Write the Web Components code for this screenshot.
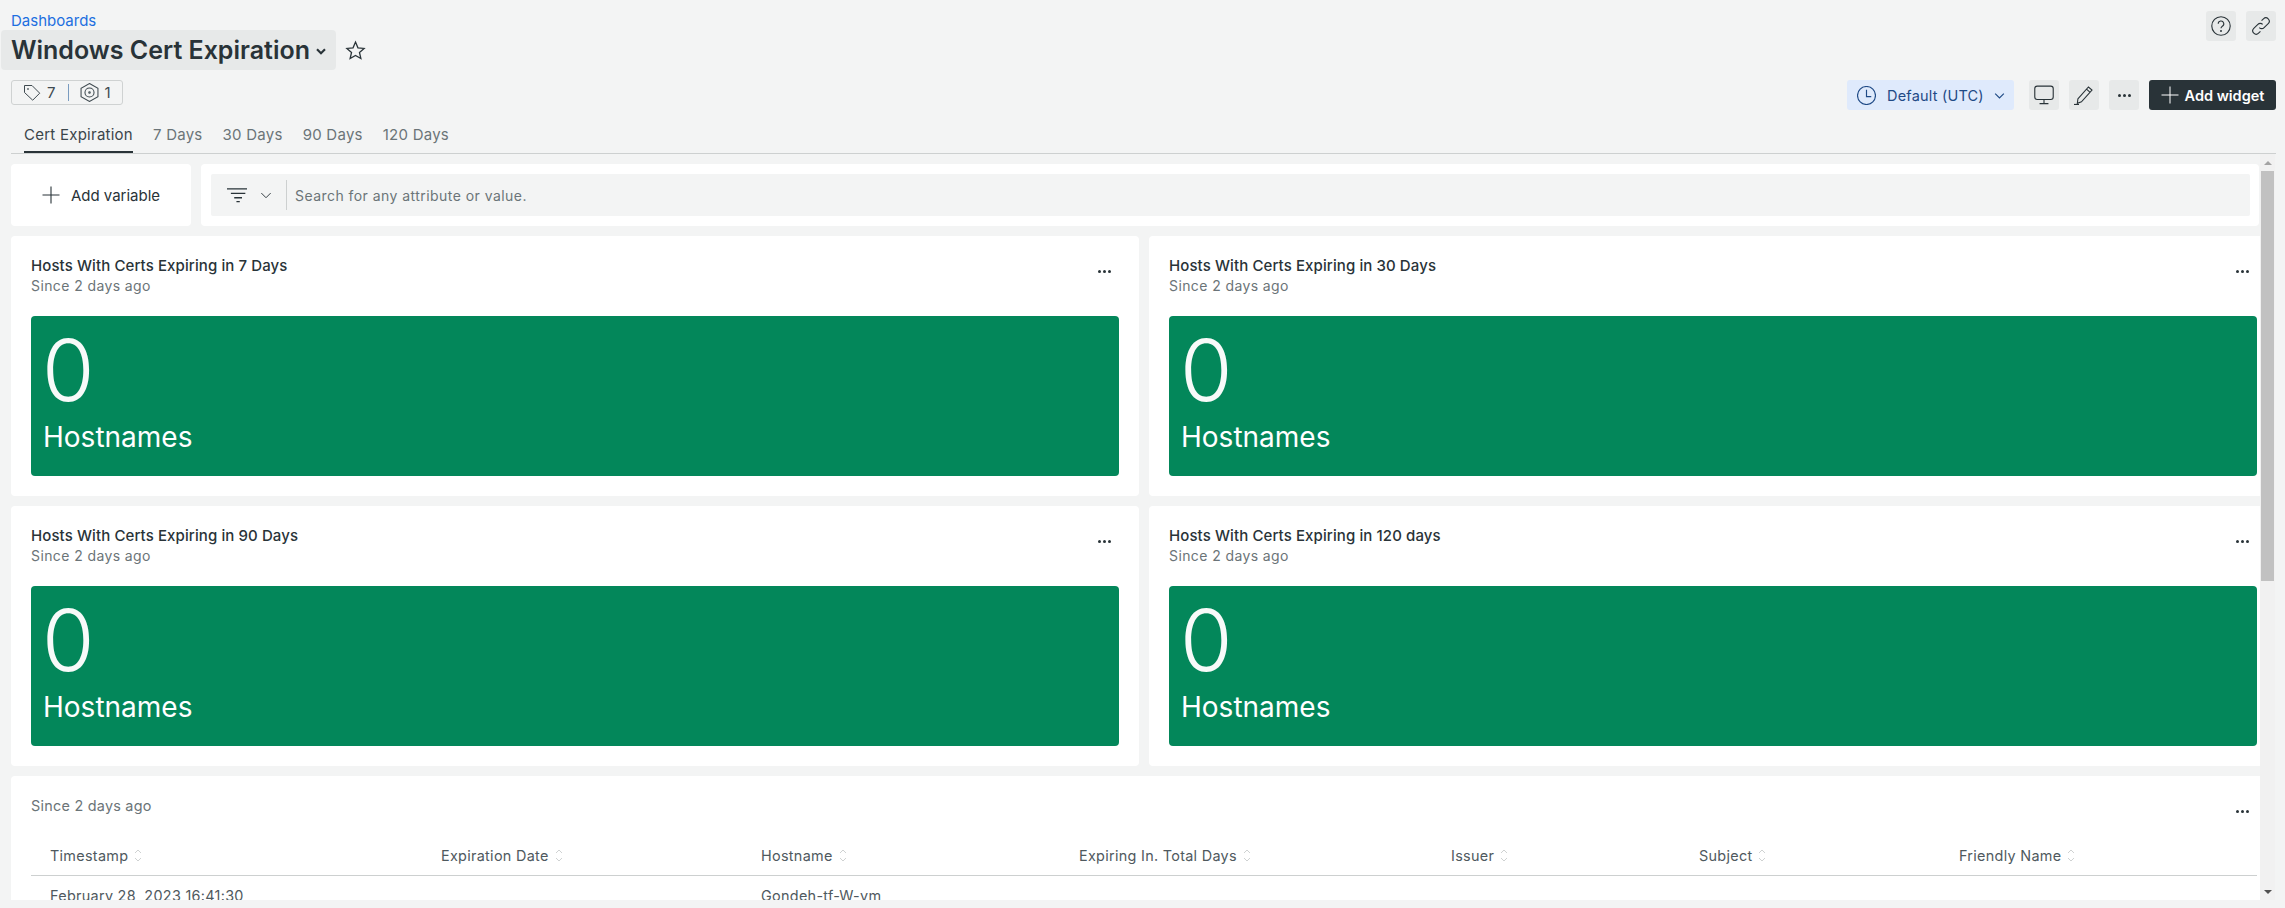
<!DOCTYPE html>
<html>
<head>
<meta charset="utf-8">
<title>Windows Cert Expiration</title>
<style>
    html, body { margin: 0; height: 908px; overflow: hidden; background: #f3f4f4; }
    body { font-family: Inter, "Liberation Sans", sans-serif; color: #293338; }
</style>
</head>
<body>
<dash-header></dash-header>
<tab-bar></tab-bar>
<scroll-pane>
    <filter-row></filter-row>
    <card-grid>
        <stat-card title="Hosts With Certs Expiring in 7 Days"></stat-card>
        <stat-card title="Hosts With Certs Expiring in 30 Days"></stat-card>
        <stat-card title="Hosts With Certs Expiring in 90 Days"></stat-card>
        <stat-card title="Hosts With Certs Expiring in 120 days"></stat-card>
    </card-grid>
    <cert-table></cert-table>
</scroll-pane>

<script>
const FONT = 'Inter, "Liberation Sans", sans-serif';
const ICONS = {
    star: '<path d="M9 1.8l2.100 4.900 5.300.5-4 3.500 1.200 5.200L9 13.200l-4.600 2.700 1.200-5.200-4-3.500 5.300-.5z"/>',
    tag: '<path d="M1.500 1.500h7.500l7.700 7.700-7 7-8.200-7.700z"/><circle cx="5" cy="5" r=".5"/>',
    hex: '<path d="M9 .5l8 4.500v8l-8 4.500-8-4.500V5z"/><circle cx="9" cy="9" r="4.300"/><circle cx="9" cy="9" r=".7"/>',
    plus: '<path d="M9 .5v17M.5 9h17"/>',
    filter: '<path d="M0 3.500h20M3.500 7.500h13M6.500 11.500h7M8.500 15h3"/>',
    chevron: '<path d="M3 6.500l6 6 6-6"/>',
    clock: '<circle cx="9" cy="9" r="8.500"/><path d="M9 3.500V10h4.500"/>',
    monitor: '<rect x=".7" y="1" width="16.600" height="12" rx="2.200"/><path d="M9 13v3.500M5 16.800h8"/>',
    pencil: '<path d="M3.500 12.500L13 1.800l3.200 2.800-9.500 10.600-3.700 1.300zM11.300 3.700l3.200 2.900"/><path d="M0 17.500h4.500"/>',
    help: '<circle cx="9" cy="9" r="8.300"/><path d="M6.500 7a2.500 2.500 0 1 1 3.700 2.200c-.8.500-1.200 1-1.200 1.900"/><circle cx="9" cy="13.600" r=".4"/>',
    link: '<path d="M7.500 10.500a3 3 0 0 0 4.300 0l3.700-3.700a3 3 0 0 0-4.300-4.300L9.500 4.200"/><path d="M10.500 7.500a3 3 0 0 0-4.300 0l-3.700 3.700a3 3 0 0 0 4.300 4.300l1.700-1.700"/>'
};
function icon(name, size, sw) {
    return `<svg width="${size}" height="${size}" viewBox="0 0 18 18" fill="none" stroke="currentColor" stroke-width="${sw || 1.1}">${ICONS[name]}</svg>`;
}

class IconButton extends HTMLElement {
    connectedCallback() {
        this.attachShadow({ mode: 'open' }).innerHTML = `
            <style>
                :host { display: flex; width: 30px; height: 30px; align-items: center; justify-content: center; background: #e7e9e9; border-radius: 3px; color: #293338; }
                span { display: flex; gap: 2px; }
                i { width: 3px; height: 3px; border-radius: 50%; background: #293338; }
                svg { display: block; }
            </style>
            ${this.getAttribute('icon') === 'dots' ? '<span><i></i><i></i><i></i></span>' : icon(this.getAttribute('icon'), 20, 1)}`;
    }
}

class DashHeader extends HTMLElement {
    constructor() {
        super();
        this.attachShadow({ mode: 'open' }).innerHTML = `
            <style>
                :host { display: flex; justify-content: space-between; height: 123px; padding: 0 9px 0 1px; font-family: ${FONT}; }
                .left { padding-top: 11px; }
                .crumb { font-size: 15px; line-height: 19px; padding-left: 10px; color: #1d6fe0; }
                .title-row { display: flex; align-items: center; gap: 9px; }
                .title { display: flex; align-items: center; gap: 5px; height: 40px; padding: 0 10px; box-sizing: border-box; width: 335px; background: #e7e9e9; border-radius: 4px; }
                h1 { margin: 0; font-size: 25px; font-weight: 600; color: #293338; white-space: nowrap; }
                .caret { color: #293338; display: flex; margin-top: 1px; }
                .star { color: #293338; display: flex; }
                .meta { display: inline-flex; align-items: center; height: 25px; margin: 10px 0 0 10px; box-sizing: border-box; width: 112px; padding-left: 11px; border: 1px solid #cfd2d2; border-radius: 3px; font-size: 15px; color: #3f4a50; }
                .meta svg { display: block; margin-right: 6px; }
                .sep { width: 1px; height: 17px; background: #7a9cc0; margin: 0 11px 0 12px; }
                .right { display: flex; flex-direction: column; align-items: flex-end; padding-top: 11px; }
                .row { display: flex; gap: 10px; }
                .actions { margin-top: 39px; }
                .tz { display: flex; align-items: center; width: 167px; height: 30px; box-sizing: border-box; padding-left: 10px; background: #dfeafc; border-radius: 3px; color: #1f4a86; font-size: 14.500px; margin-right: 5px; letter-spacing: .2px; }
                .tz svg { display: block; }
                .tz b { font-weight: 400; margin: 0 9px 0 11px; }
                .add { display: flex; align-items: center; justify-content: center; gap: 6px; width: 127px; height: 30px; background: #293338; color: #fff; border-radius: 3px; font-size: 14.500px; font-weight: 600; }
            </style>
            <div class="left">
                <div class="crumb">Dashboards</div>
                <div class="title-row">
                    <div class="title"><h1>Windows Cert Expiration</h1><span class="caret">${icon('chevron', 12, 3.2)}</span></div>
                    <span class="star">${icon('star', 21, 1.1)}</span>
                </div>
                <div class="meta">${icon('tag', 18, 1)}7<span class="sep"></span>${icon('hex', 19, 1)}1</div>
            </div>
            <div class="right">
                <div class="row"><icon-button icon="help"></icon-button><icon-button icon="link"></icon-button></div>
                <div class="row actions">
                    <div class="tz">${icon('clock', 19, 1.1)}<b>Default (UTC)</b>${icon('chevron', 13, 1.6)}</div>
                    <icon-button icon="monitor"></icon-button>
                    <icon-button icon="pencil"></icon-button>
                    <icon-button icon="dots"></icon-button>
                    <div class="add">${icon('plus', 18, 1)}<span>Add widget</span></div>
                </div>
            </div>`;
    }
}

class TabBar extends HTMLElement {
    constructor() {
        super();
        const tabs = ['Cert Expiration', '7 Days', '30 Days', '90 Days', '120 Days'];
        this.attachShadow({ mode: 'open' }).innerHTML = `
            <style>
                :host { display: flex; gap: 20px; height: 30px; margin: 0 9px 0 11px; padding-left: 13px; border-bottom: 1px solid #cdd0d0; font-family: ${FONT}; }
                a { display: block; height: 30px; line-height: 24px; font-size: 15px; color: #6b7478; letter-spacing: .25px; box-sizing: border-box; }
                a.on { color: #3b454a; border-bottom: 2px solid #293338; }
            </style>
            ${tabs.map((t, i) => `<a class="${i ? '' : 'on'}">${t}</a>`).join('')}`;
    }
}

class ScrollPane extends HTMLElement {
    constructor() {
        super();
        this.attachShadow({ mode: 'open' }).innerHTML = `
            <style>
                :host { display: flex; height: 746px; margin-left: 11px; width: 2265px; }
                .view { width: 2249px; overflow: hidden; }
                .inner { width: 2266px; padding-top: 10px; display: flex; flex-direction: column; gap: 10px; }
                .bar { width: 15px; display: flex; flex-direction: column; align-items: center; background: #f1f1f1; }
                .up, .down { height: 17px; flex: none; display: flex; align-items: center; justify-content: center; }
                .up i, .down i { width: 0; height: 0; border: 4px solid transparent; }
                .up i { border-bottom: 4px solid #a3a3a3; border-top: 0; }
                .down i { border-top: 4px solid #505050; border-bottom: 0; }
                .thumb { width: 13px; height: 410px; flex: none; background: #c1c1c1; }
                .gap { flex: 1; }
            </style>
            <div class="view"><div class="inner"><slot></slot></div></div>
            <div class="bar">
                <div class="up"><i></i></div>
                <div class="thumb"></div>
                <div class="gap"></div>
                <div class="down"><i></i></div>
            </div>`;
    }
}

class FilterRow extends HTMLElement {
    constructor() {
        super();
        this.attachShadow({ mode: 'open' }).innerHTML = `
            <style>
                :host { display: flex; gap: 10px; height: 62px; width: 2248px; font-family: ${FONT}; }
                .var { display: flex; align-items: center; justify-content: center; gap: 11px; width: 180px; flex: none; background: #fff; border-radius: 4px; font-size: 15px; color: #293338; font-weight: 400; }
                .var svg { display: block; }
                .search { flex: 1; background: #fff; border-radius: 4px; padding: 10px 9px 10px 10px; box-sizing: border-box; }
                .box { display: flex; align-items: center; height: 42px; background: #f3f4f4; border-radius: 2px; color: #293338; }
                .f { display: flex; align-items: center; width: 76px; height: 30px; box-sizing: border-box; padding-left: 16px; gap: 12px; border-right: 1px solid #cdd0d0; flex: none; }
                .f svg { display: block; }
                .p { font-size: 14px; color: #6b7478; margin-left: 8px; letter-spacing: .45px; }
            </style>
            <div class="var">${icon('plus', 18, 1.1)}<span>Add variable</span></div>
            <div class="search"><div class="box">
                <div class="f">${icon('filter', 20, 1.2)}${icon('chevron', 14, 1.2)}</div>
                <span class="p">Search for any attribute or value.</span>
            </div></div>`;
    }
}

class CardGrid extends HTMLElement {
    constructor() {
        super();
        this.attachShadow({ mode: 'open' }).innerHTML = `
            <style>:host { display: grid; grid-template-columns: 1fr 1fr; gap: 10px; }</style>
            <slot></slot>`;
    }
}

class StatCard extends HTMLElement {
    connectedCallback() {
        this.attachShadow({ mode: 'open' }).innerHTML = `
            <style>
                :host { display: block; height: 260px; background: #fff; border-radius: 4px; padding: 20px; box-sizing: border-box; font-family: ${FONT}; }
                .head { display: flex; justify-content: space-between; height: 60px; }
                .t { font-size: 15px; line-height: 20px; font-weight: 500; color: #293338; letter-spacing: .1px; }
                .s { font-size: 14px; line-height: 20px; color: #6b7478; letter-spacing: .4px; }
                .dots { display: flex; gap: 2px; margin: 14px 8px 0 0; height: 3px; }
                .dots i { width: 3px; height: 3px; border-radius: 50%; background: #293338; }
                .tile { height: 160px; background: #03875a; border-radius: 4px; color: #fff; padding: 5px 0 0 12px; box-sizing: border-box; overflow: hidden; }
                .n { font-size: 85px; font-weight: 300; line-height: 99px; height: 99px; margin-left: -1px; color: #f7faf9; }
                .l { font-size: 28px; font-weight: 400; line-height: 34px; }
            </style>
            <div class="head">
                <div><div class="t">${this.getAttribute('title')}</div><div class="s">Since 2 days ago</div></div>
                <div class="dots"><i></i><i></i><i></i></div>
            </div>
            <div class="tile"><div class="n">0</div><div class="l">Hostnames</div></div>`;
    }
}

class CertTable extends HTMLElement {
    constructor() {
        super();
        const cols = ['Timestamp', 'Expiration Date', 'Hostname', 'Expiring In. Total Days', 'Issuer', 'Subject', 'Friendly Name'];
        const sort = `<svg width="8" height="15" viewBox="0 0 8 15" fill="none" stroke="#cfd2d2" stroke-width="1"><path d="M1 5l3-3 3 3M1 10l3 3 3-3"/></svg>`;
        this.attachShadow({ mode: 'open' }).innerHTML = `
            <style>
                :host { display: block; height: 200px; background: #fff; border-radius: 4px 4px 0 0; padding: 20px; box-sizing: border-box; font-family: ${FONT}; color: #4f595e; font-size: 14.400px; }
                .top { display: flex; justify-content: space-between; height: 40px; color: #6b7478; letter-spacing: .25px; line-height: 20px; }
                .dots { display: flex; gap: 2px; margin: 14px 8px 0 0; height: 3px; }
                .dots i { width: 3px; height: 3px; border-radius: 50%; background: #293338; }
                .grid { display: grid; grid-template-columns: 391px 320px 318px 372px 248px 260px 1fr; }
                .h { display: flex; align-items: center; gap: 6px; height: 39px; padding-left: 19px; border-bottom: 1px solid #cdd0d0; letter-spacing: .3px; }
                .h svg { display: block; }
                .c { padding-left: 19px; line-height: 40px; letter-spacing: .3px; }
            </style>
            <div class="top"><span>Since 2 days ago</span><div class="dots"><i></i><i></i><i></i></div></div>
            <div class="grid">
                ${cols.map(c => `<div class="h">${c}${sort}</div>`).join('')}
                <div class="c">February 28, 2023 16:41:30</div><div class="c"></div><div class="c">Gondeh-tf-W-vm</div>
            </div>`;
    }
}

customElements.define('icon-button', IconButton);
customElements.define('dash-header', DashHeader);
customElements.define('tab-bar', TabBar);
customElements.define('scroll-pane', ScrollPane);
customElements.define('filter-row', FilterRow);
customElements.define('card-grid', CardGrid);
customElements.define('stat-card', StatCard);
customElements.define('cert-table', CertTable);
</script>
</body>
</html>
